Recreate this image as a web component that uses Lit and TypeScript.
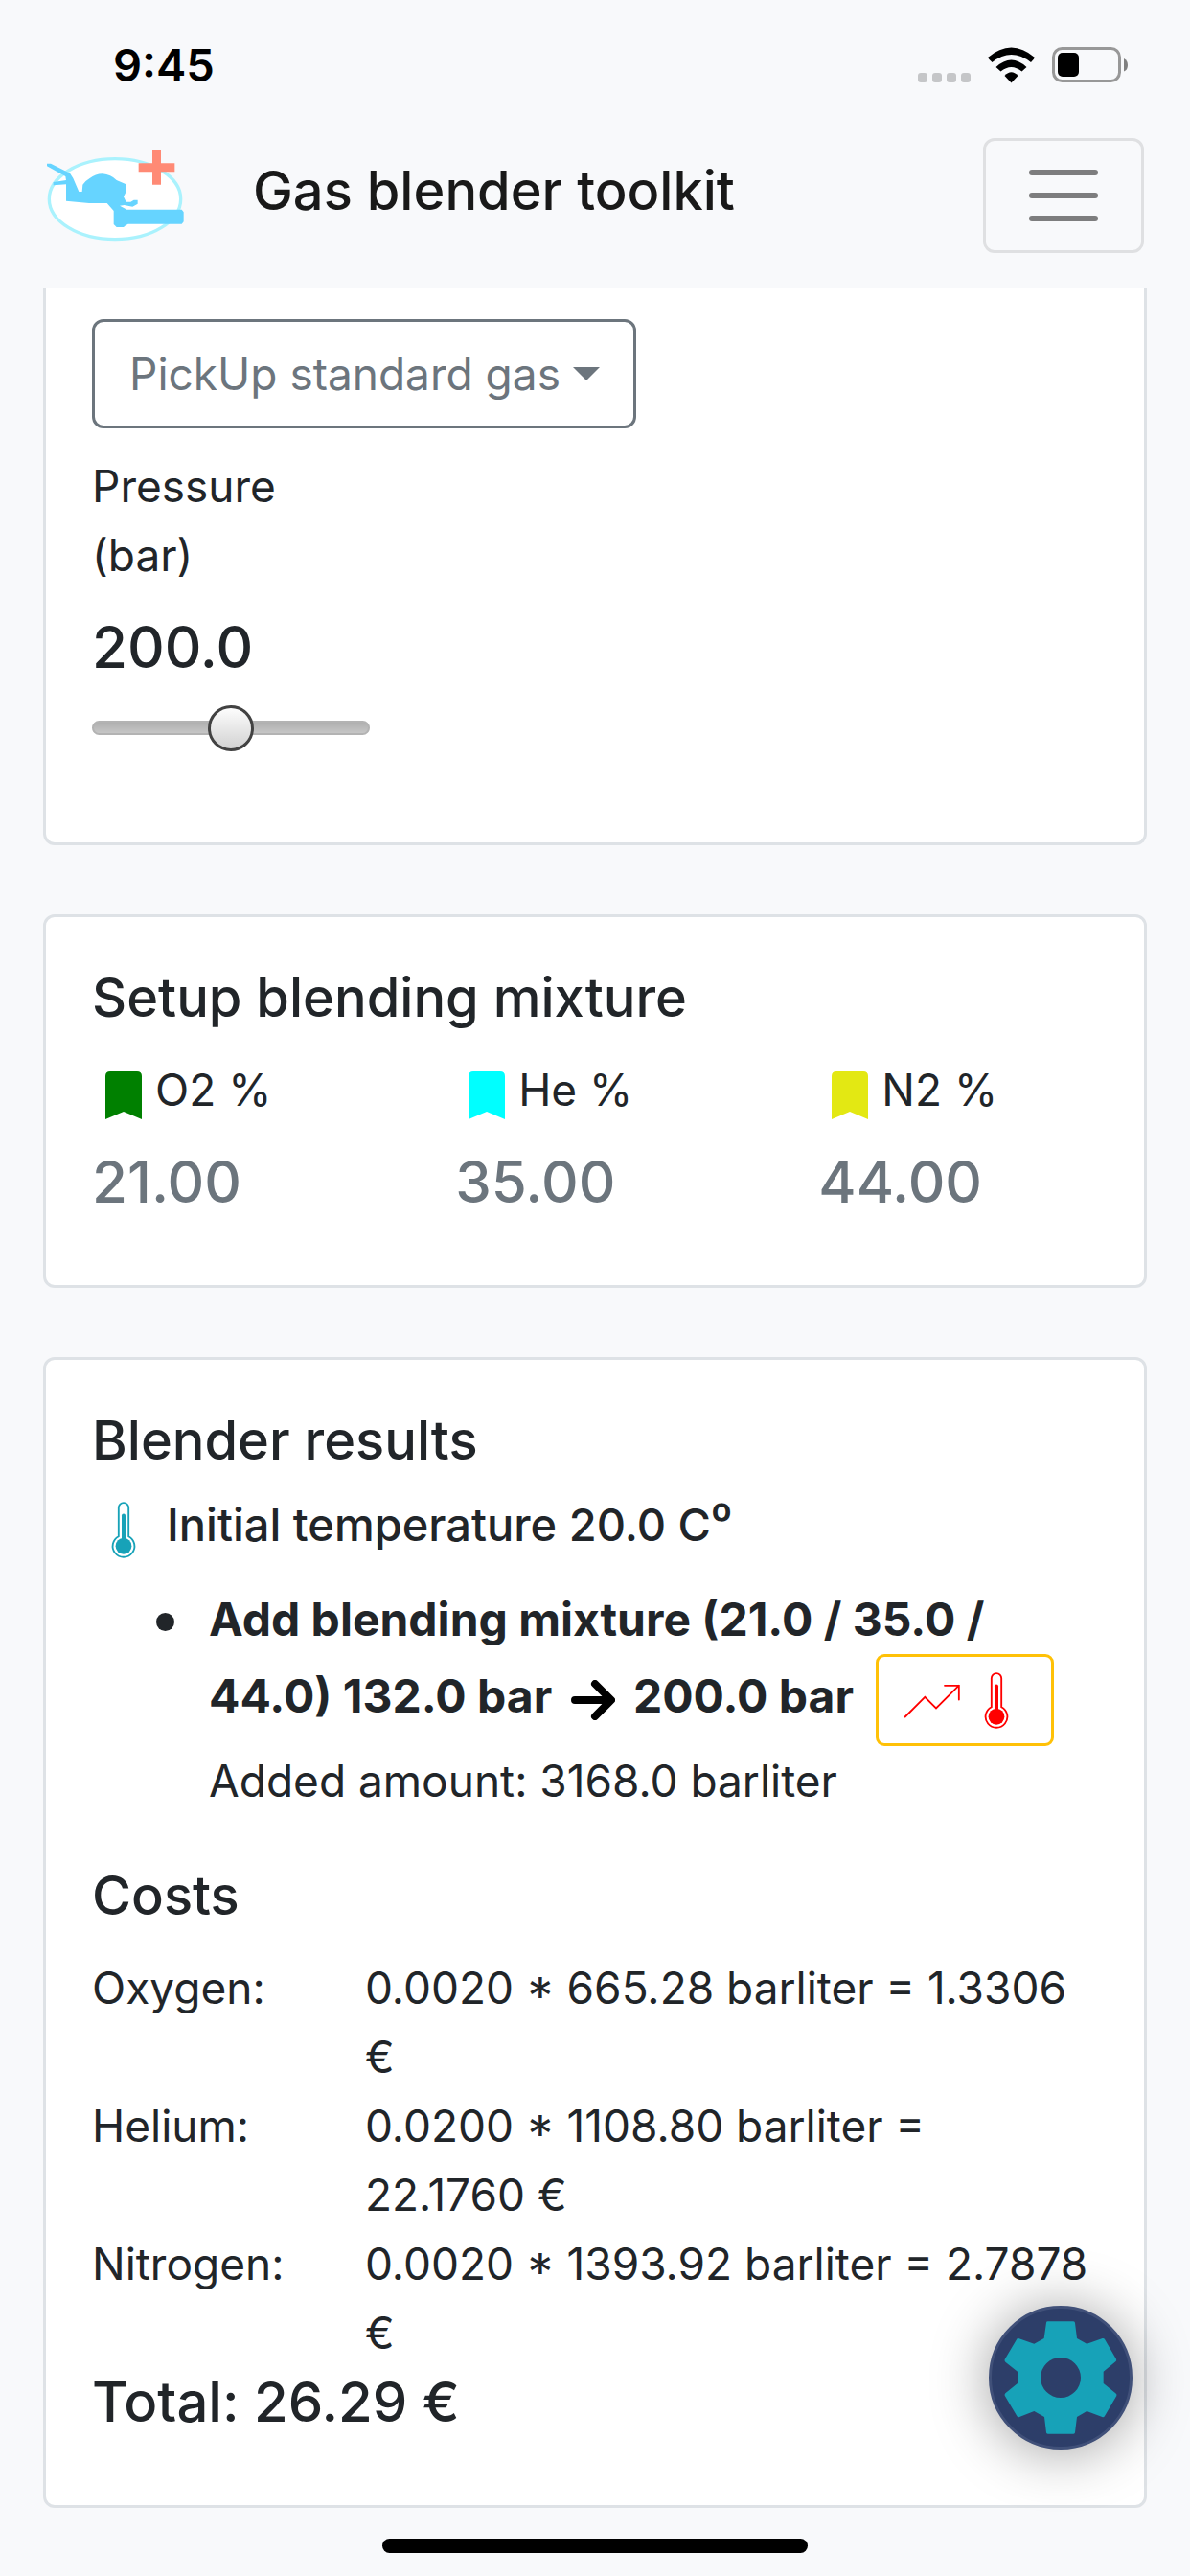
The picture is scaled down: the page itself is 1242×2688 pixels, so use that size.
import { LitElement, html, css, svg } from "lit";
import { customElement, property, state } from "lit/decorators.js";

interface Gas {
  name: string;
  share: string;
  colour: string;
}

interface Cost {
  gas: string;
  formula: string;
}

const gases: Gas[] = [
  { name: "O2 %", share: "21.00", colour: "#008000" },
  { name: "He %", share: "35.00", colour: "#0ff" },
  { name: "N2 %", share: "44.00", colour: "#e3e813" },
];

const costs: Cost[] = [
  { gas: "Oxygen:", formula: "0.0020 * 665.28 barliter = 1.3306 €" },
  { gas: "Helium:", formula: "0.0200 * 1108.80 barliter = 22.1760 €" },
  { gas: "Nitrogen:", formula: "0.0020 * 1393.92 barliter = 2.7878 €" },
];

const thermometer = svg`
  <path d="M458.500 239V150a15.500 15.500 0 0 1 31 0V239a34 34 0 1 1-31 0z" fill="none" stroke="currentColor" stroke-width="5.500"/>
  <path d="M474 174v90" stroke="currentColor" stroke-width="12" stroke-linecap="round"/>
  <circle cx="474" cy="269" r="25" fill="currentColor"/>`;

@customElement("status-bar")
export class StatusBar extends LitElement {
  static styles = css`
    :host {
      display: flex;
      justify-content: space-between;
      align-items: center;
      height: 136px;
      padding: 0 65px 0 118px;
      box-sizing: border-box;
      color: #000;
    }
    .time {
      font-size: 47px;
      font-weight: 600;
      line-height: 72px;
    }
    .signals {
      display: flex;
      align-items: center;
      gap: 18px;
    }
    svg {
      display: block;
    }
  `;

  render() {
    return html`
      <span class="time">9:45</span>
      <div class="signals">
        <svg width="55" height="38" viewBox="0 0 55 38" fill="#c5c6c8" aria-hidden="true">
          <rect y="27" width="10" height="10" rx="3" />
          <rect x="15" y="27" width="10" height="10" rx="3" />
          <rect x="30" y="27" width="10" height="10" rx="3" />
          <rect x="45" y="27" width="10" height="10" rx="3" />
        </svg>
        <svg width="49" height="38" viewBox="0 0 49 38" aria-hidden="true">
          <path d="M0 11Q24.500-10 49 11q-1 2-4 5Q24.500 0 4.500 16 1 13 0 11z" />
          <path d="M8.500 21q16-15 32 0l-5 4.500q-11-9-22 0z" />
          <path d="M17.500 30q7-7.500 14 0l-7 7.500z" />
        </svg>
        <svg width="79" height="38" viewBox="0 0 79 38" aria-hidden="true">
          <rect x="1.500" y="1.500" width="69" height="34" rx="9" fill="none" stroke="#989898" stroke-width="3" />
          <rect x="6" y="6" width="22" height="25" rx="5" />
          <path d="M75 12q4 2 4 7t-4 6.500z" fill="#808080" />
        </svg>
      </div>
    `;
  }
}

@customElement("app-header")
export class AppHeader extends LitElement {
  static styles = css`
    :host {
      display: flex;
      align-items: center;
      height: 164px;
      padding: 0 48px;
      box-sizing: border-box;
    }
    .brand {
      display: flex;
      align-items: center;
      gap: 72px;
      margin-right: auto;
      padding-bottom: 38px;
      color: #191919;
      font-size: 56px;
      font-weight: 500;
      line-height: 72px;
      text-decoration: none;
    }
    .logo {
      display: block;
      padding-top: 8px;
    }
    .toggler {
      display: flex;
      align-items: center;
      justify-content: center;
      width: 168px;
      height: 120px;
      margin-bottom: 28px;
      padding: 0;
      border: 3px solid #dfe0e2;
      border-radius: 12px;
      background: none;
    }
  `;

  render() {
    return html`
      <a class="brand" href="#">
        <svg class="logo" width="144" height="97" viewBox="55 45 432 291" aria-hidden="true">
          <ellipse cx="271" cy="203" rx="206" ry="126" fill="#fff" stroke="#aaf2fd" stroke-width="10" />
          <path
            fill="#66d4ff"
            d="M58 92L70 92 130 122 140 138 158 180 168 180 170 158Q178 146 192 138 210 124 232 124 258 126 276 144L304 156V184L298 196 306 212H320L330 206 342 206V218L326 227 300 222 286 224 300 232 308 236H480L486 244V274L480 281H312L304 286 298 291H276L267 282V240L246 216H190L118 209V157L78 160V150L118 144 116 132 58 100z"
          />
          <path fill="#ff8a75" d="M388 48h27v43h43v27h-43v40h-27v-40h-43V91h43z" />
        </svg>
        Gas blender toolkit
      </a>
      <button class="toggler" type="button" aria-label="Toggle navigation">
        <svg width="72" height="54" viewBox="0 0 72 54" fill="#7d7d7e" aria-hidden="true">
          <rect width="72" height="6" rx="3" />
          <rect y="24" width="72" height="6" rx="3" />
          <rect y="48" width="72" height="6" rx="3" />
        </svg>
      </button>
    `;
  }
}

@customElement("pressure-field")
export class PressureField extends LitElement {
  @state() private pressure = 200;

  static styles = css`
    :host {
      display: flex;
      flex-direction: column;
      gap: 24px;
      width: 290px;
    }
    .value {
      font-size: 60px;
      font-weight: 500;
      line-height: 72px;
    }
    .slider {
      appearance: none;
      display: block;
      width: 100%;
      height: 48px;
      margin: 0;
      background: none;
    }
    .slider::-webkit-slider-runnable-track {
      height: 15px;
      box-sizing: border-box;
      border: 2px solid #b3b3b3;
      border-radius: 8px;
      background: linear-gradient(#b0b0b0, #c6c6c6);
    }
    .slider::-webkit-slider-thumb {
      appearance: none;
      width: 48px;
      height: 48px;
      margin-top: -18px;
      box-sizing: border-box;
      border: 3px solid #424242;
      border-radius: 50%;
      background: linear-gradient(#fdfdfd, #d2d2d2);
    }
  `;

  render() {
    return html`
      <label for="pressure">Pressure<br />(bar)</label>
      <output class="value" for="pressure">${this.pressure.toFixed(1)}</output>
      <input
        class="slider"
        id="pressure"
        type="range"
        min="0"
        max="400"
        .value=${String(this.pressure)}
        @input=${(e: Event) => (this.pressure = Number((e.target as HTMLInputElement).value))}
      />
    `;
  }
}

@customElement("gas-share")
export class GasShare extends LitElement {
  @property({ attribute: false }) gas!: Gas;

  static styles = css`
    :host {
      display: flex;
      flex-direction: column;
      gap: 24px;
    }
    .name {
      display: flex;
    }
    .value {
      color: #6c757d;
      font-size: 60px;
      font-weight: 500;
      line-height: 72px;
    }
  `;

  render() {
    return html`
      <div class="name">
        <svg width="66" height="72" viewBox="0 0 66 72" fill=${this.gas.colour} aria-hidden="true">
          <path d="M14 22q0-5 5-5h28q5 0 5 5v45l-19-8-19 8z" />
        </svg>
        ${this.gas.name}
      </div>
      <div class="value">${this.gas.share}</div>
    `;
  }
}

@customElement("app-root")
export class AppRoot extends LitElement {
  static styles = css`
    :host {
      display: flex;
      flex-direction: column;
      min-height: 100vh;
      background: #f8f9fb;
      color: #212529;
      font-family: Inter, "Liberation Sans", sans-serif;
      font-size: 46px;
      line-height: 72px;
    }
    .cards {
      display: flex;
      flex-direction: column;
      gap: 72px;
      padding: 0 45px;
    }
    .card {
      padding: 48px;
      padding-bottom: 72px;
      border: 3px solid #dee2e6;
      border-radius: 12px;
      background: #fff;
    }
    .card.scrolled {
      display: flex;
      flex-direction: column;
      align-items: flex-start;
      gap: 24px;
      padding-top: 33px;
      padding-bottom: 96px;
      border-top: 0;
      border-radius: 0 0 12px 12px;
    }
    .picker {
      display: grid;
      align-items: center;
    }
    .picker select,
    .picker svg {
      grid-area: 1 / 1;
    }
    .picker select {
      appearance: none;
      height: 114px;
      margin: 0;
      padding: 0 76px 0 36px;
      border: 3px solid #6c757d;
      border-radius: 12px;
      background: none;
      color: #6c757d;
      font: inherit;
    }
    .picker svg {
      justify-self: end;
      margin-right: 38px;
      pointer-events: none;
    }
    .title {
      margin: 0;
      font-size: 56px;
      font-weight: 500;
      line-height: 72px;
    }
    .shares {
      display: grid;
      grid-template-columns: 13fr 13fr 10fr;
      margin-top: 24px;
    }
    .initial {
      display: flex;
      align-items: center;
      gap: 30px;
      margin: 16px 0 27px;
      padding-left: 18px;
      font-size: 47px;
      font-weight: 500;
    }
    .initial svg {
      padding-top: 10px;
      color: #17a2b8;
    }
    .steps {
      margin: 0;
      padding: 0 0 0 122px;
      list-style: none;
    }
    .step::before {
      content: "";
      float: left;
      width: 19px;
      height: 19px;
      margin: 29px 0 0 -55px;
      border-radius: 50%;
      background: currentColor;
    }
    .mix {
      font-size: 48px;
      font-weight: 700;
    }
    .arrow {
      margin: 0 8px;
      vertical-align: middle;
    }
    .heat {
      display: inline-flex;
      align-items: center;
      gap: 22px;
      width: 186px;
      height: 96px;
      margin: 0 0 0 12px;
      padding: 0 0 0 26px;
      box-sizing: border-box;
      border: 3px solid #ffc107;
      border-radius: 9px;
      background: none;
      color: #f00;
      vertical-align: middle;
    }
    .costs-title {
      margin-top: 48px;
    }
    .costs {
      width: 100%;
      margin-top: 24px;
      border-collapse: collapse;
    }
    .costs th,
    .costs td {
      padding: 0 8px 0 0;
      font-weight: 400;
      text-align: left;
      vertical-align: top;
    }
    .costs th {
      width: 277px;
    }
    .total {
      font-size: 58px;
    }
    .settings {
      position: fixed;
      right: 60px;
      bottom: 132px;
      display: flex;
      align-items: center;
      justify-content: center;
      width: 150px;
      height: 150px;
      padding: 0;
      border: 3px solid #405079;
      border-radius: 50%;
      background: #2d3e69;
      box-shadow: 0 3px 60px rgba(0, 0, 0, 0.38);
    }
    .home {
      width: 444px;
      height: 15px;
      margin: auto auto 24px;
      border-radius: 8px;
      background: #000;
    }
  `;

  render() {
    return html`
      <status-bar></status-bar>
      <app-header></app-header>
      <main class="cards">
        <section class="card scrolled">
          <div class="picker">
            <select aria-label="Standard gas">
              <option>PickUp standard gas</option>
            </select>
            <svg width="28" height="14" viewBox="0 0 28 14" fill="#6c757d" aria-hidden="true">
              <path d="M0 0h28L14 14z" />
            </svg>
          </div>
          <pressure-field></pressure-field>
        </section>

        <section class="card">
          <h2 class="title">Setup blending mixture</h2>
          <div class="shares">${gases.map((gas) => html`<gas-share .gas=${gas}></gas-share>`)}</div>
        </section>

        <section class="card">
          <h2 class="title">Blender results</h2>
          <p class="initial">
            <svg width="30" height="61" viewBox="430 128 88 182" aria-hidden="true">${thermometer}</svg>
            Initial temperature 20.0 C⁰
          </p>
          <ul class="steps">
            <li class="step">
              <div class="mix">
                Add blending mixture (21.0 / 35.0 /<br />44.0) 132.0 bar
                <svg class="arrow" width="46" height="42" viewBox="0 0 46 42" fill="none" stroke="#000" stroke-width="8" stroke-linecap="round" stroke-linejoin="round" role="img" aria-label="to">
                  <path d="M4 21h37M25 4l17 17-17 17" />
                </svg>
                200.0 bar
                <button class="heat" type="button" aria-label="Temperature rise">
                  <svg width="60" height="61" viewBox="187 128 180 182" fill="none" stroke="currentColor" stroke-width="5.500" stroke-linecap="round" aria-hidden="true">
                    <path d="M192 270l62-62 35 35 71-71M316 172h44.500v44" />
                  </svg>
                  <svg width="30" height="61" viewBox="430 128 88 182" aria-hidden="true">${thermometer}</svg>
                </button>
              </div>
              Added amount: 3168.0 barliter
            </li>
          </ul>

          <h2 class="title costs-title">Costs</h2>
          <table class="costs">
            <tbody>
              ${costs.map((cost) => html`<tr><th scope="row">${cost.gas}</th><td>${cost.formula}</td></tr>`)}
            </tbody>
          </table>
          <h2 class="title total">Total: 26.29 €</h2>
        </section>
      </main>
      <div class="home"></div>
      <button class="settings" type="button" aria-label="Settings">
        <svg width="120" height="120" viewBox="201 153 360 360" aria-hidden="true">
          <path
            fill="#17a2b8"
            fill-rule="evenodd"
            d="M342 157h79q5 0 5 5l6 48 31 17 49-17q5-1 7 3l36 62q2 5-2 8l-38 31v37l38 31q5 4 3 8l-37 63q-3 5-8 3l-48-18-31 18-6 49q0 4-5 4h-80q-5 0-5-4l-6-49-32-18-46 18q-5 2-8-3l-38-64q-1-4 2-7l38-31v-37l-38-30q-4-4-2-8l37-62q2-5 6-4l49 17 31-17 7-49q0-4 5-4zM381 270a63 63 0 1 0 0 126 63 63 0 0 0 0-126z"
          />
        </svg>
      </button>
    `;
  }
}
